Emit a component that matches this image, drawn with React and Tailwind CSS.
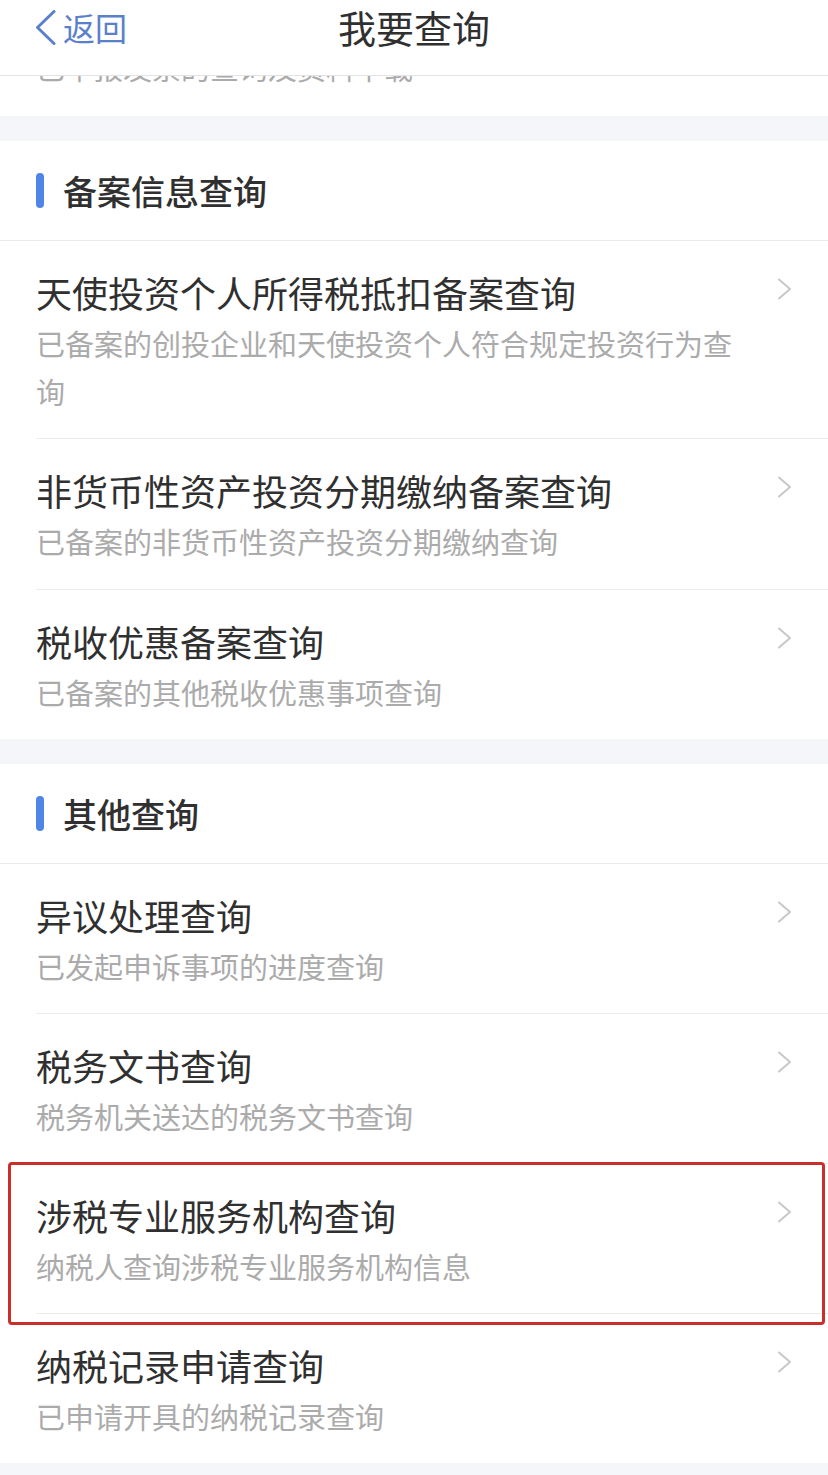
import React from "react";

const F = "font-['Noto_Sans_CJK_SC',sans-serif]";

function Chevron() {
  return (
    <svg width="15" height="22" viewBox="0 0 15 22" fill="none">
      <polyline points="2,1.5 13,11 2,20.5" stroke="#c7c7cc" strokeWidth="2" strokeLinecap="round" strokeLinejoin="round" />
    </svg>
  );
}

function Item({ title, sub, last, highlight, tall }) {
  return (
    <div className="relative bg-white pl-[36px]">
      <div className={`flex ${last ? "" : "border-b border-[#ebebed]"}`}>
        <div className={`w-[714px] pt-[29px] ${tall ? "pb-[24px]" : "pb-[23px]"}`}>
          <div className="text-[36px] leading-[44px] text-[#303030]">{title}</div>
          <div className="mt-[5px] text-[29px] leading-[48px] text-[#ababab]">{sub}</div>
        </div>
        <div className="ml-[27px] mt-[37px] w-[15px]">
          <Chevron />
        </div>
      </div>
      {highlight && (
        <div className="pointer-events-none absolute z-10 left-[8px] right-[3px] -top-[2px] -bottom-[11px] rounded-[4px] border-[3px] border-[#c9302c]" />
      )}
    </div>
  );
}

function SectionHeader({ title }) {
  return (
    <div className="flex h-[100px] items-center border-b border-[#ebebed] bg-white pl-[36px]">
      <div className="h-[35px] w-[8px] rounded-full bg-[#4f85e6]" />
      <div className="ml-[19px] text-[34px] font-medium leading-[44px] text-[#303030]">{title}</div>
    </div>
  );
}

export default function App() {
  return (
    <div className={`${F} w-[828px] h-[1475px] overflow-hidden bg-[#f5f6fa]`}>
      {/* Nav bar */}
      <div className="h-[76px] border-b border-[#e3e3e5] bg-white">
        <div className="grid h-[54px] grid-cols-[1fr_auto_1fr] items-center">
          <div className="flex items-center pl-[35px]">
            <svg width="21" height="35" viewBox="0 0 21 35" fill="none">
              <polyline points="19,1.5 2.5,17.5 19,33.5" stroke="#5a80cc" strokeWidth="3" strokeLinecap="round" strokeLinejoin="round" />
            </svg>
            <span className="ml-[7px] text-[32px] leading-[44px] text-[#5a80cc]">返回</span>
          </div>
          <div className="text-[38px] leading-[48px] text-[#303030]">我要查询</div>
          <div />
        </div>
      </div>

      {/* partially scrolled item */}
      <div className="h-[40px] overflow-hidden bg-white pl-[36px]">
        <div className="-mt-[33px] text-[29px] leading-[48px] text-[#ababab]">已申报发票的查询及资料下载</div>
      </div>

      <div className="h-[25px]" />

      <SectionHeader title="备案信息查询" />
      <Item title="天使投资个人所得税抵扣备案查询" sub="已备案的创投企业和天使投资个人符合规定投资行为查询" />
      <Item title="非货币性资产投资分期缴纳备案查询" sub="已备案的非货币性资产投资分期缴纳查询" tall />
      <Item title="税收优惠备案查询" sub="已备案的其他税收优惠事项查询" last />

      <div className="h-[25px]" />

      <SectionHeader title="其他查询" />
      <Item title="异议处理查询" sub="已发起申诉事项的进度查询" />
      <Item title="税务文书查询" sub="税务机关送达的税务文书查询" />
      <Item title="涉税专业服务机构查询" sub="纳税人查询涉税专业服务机构信息" highlight />
      <Item title="纳税记录申请查询" sub="已申请开具的纳税记录查询" last />
    </div>
  );
}
